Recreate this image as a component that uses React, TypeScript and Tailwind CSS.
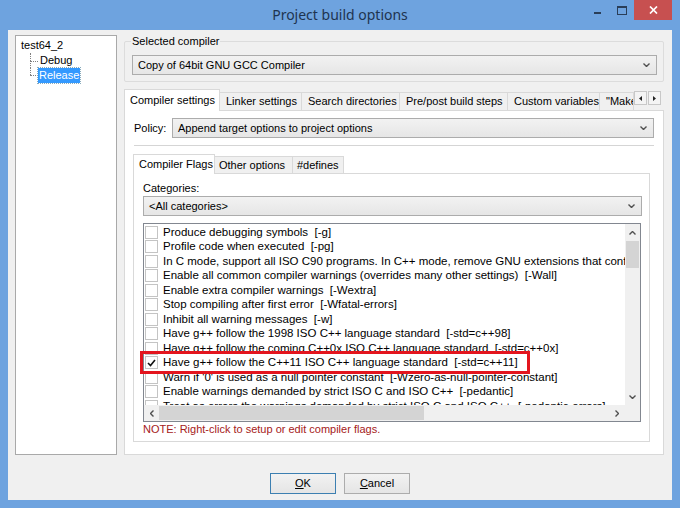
import React from "react";

const flags: { text: string; checked?: boolean }[] = [
  { text: "Produce debugging symbols  [-g]" },
  { text: "Profile code when executed  [-pg]" },
  {
    text: "In C mode, support all ISO C90 programs. In C++ mode, remove GNU extensions that conflict with ISO C++  [-ansi]",
  },
  { text: "Enable all common compiler warnings (overrides many other settings)  [-Wall]" },
  { text: "Enable extra compiler warnings  [-Wextra]" },
  { text: "Stop compiling after first error  [-Wfatal-errors]" },
  { text: "Inhibit all warning messages  [-w]" },
  { text: "Have g++ follow the 1998 ISO C++ language standard  [-std=c++98]" },
  { text: "Have g++ follow the coming C++0x ISO C++ language standard  [-std=c++0x]" },
  { text: "Have g++ follow the C++11 ISO C++ language standard  [-std=c++11]", checked: true },
  { text: "Warn if '0' is used as a null pointer constant  [-Wzero-as-null-pointer-constant]" },
  { text: "Enable warnings demanded by strict ISO C and ISO C++  [-pedantic]" },
  { text: "Treat as errors the warnings demanded by strict ISO C and ISO C++  [-pedantic-errors]" },
];

function Chevron({ dir = "down" }: { dir?: "down" | "up" | "left" | "right" }) {
  const pts = {
    down: "0.5,0.5 3.5,3.5 6.5,0.5",
    up: "0.5,3.5 3.5,0.5 6.5,3.5",
    left: "3.5,0.5 0.5,3.5 3.5,6.5",
    right: "0.5,0.5 3.5,3.5 0.5,6.5",
  }[dir];
  const vertical = dir === "down" || dir === "up";
  return (
    <svg width={vertical ? 7 : 4} height={vertical ? 4 : 7} viewBox={vertical ? "0 0 7 4" : "0 0 4 7"}>
      <polyline points={pts} fill="none" stroke="#505050" strokeWidth="1.4" />
    </svg>
  );
}

function Combo({ text, className }: { text: string; className: string }) {
  return (
    <div
      className={
        "flex items-center border border-[#acacac] bg-gradient-to-b from-[#f2f2f2] to-[#e6e6e6] pl-[5px] pr-[6px] " +
        className
      }
    >
      <span className="flex-1 whitespace-nowrap">{text}</span>
      <Chevron />
    </div>
  );
}

function Checkbox({ checked }: { checked?: boolean }) {
  return (
    <div className="w-[13px] h-[13px] shrink-0 border border-[#c4c4c4] bg-white flex items-center justify-center mr-[5px]">
      {checked && (
        <svg width="9" height="8" viewBox="0 0 9 8">
          <polyline points="1,4 3.5,6.5 8,1" fill="none" stroke="#111" strokeWidth="1.6" />
        </svg>
      )}
    </div>
  );
}

export default function App() {
  return (
    <div className="w-[680px] h-[508px] bg-[#6ea3df] flex flex-col overflow-hidden font-['Liberation_Sans',Arial,sans-serif] text-[11px] text-black leading-[13px]">
      {/* title bar */}
      <div className="h-[30px] grid grid-cols-[1fr_auto_1fr]">
        <div />
        <div className="pt-[6px] text-[14px] leading-[18px] text-[#1e3450] font-['Noto_Sans',sans-serif]">
          Project build options
        </div>
        <div className="flex justify-end items-start pr-[8px]">
          <div className="w-[26px] h-[20px] flex items-center justify-center">
            <div className="w-[7px] h-[2px] bg-[#2a3e58] mt-[6px]" />
          </div>
          <div className="w-[24px] h-[20px] flex items-center justify-center">
            <div className="w-[10px] h-[9px] border border-[#2a3e58] border-t-2" />
          </div>
          <div className="w-[38px] h-[20px] bg-[#c75050] flex items-center justify-center">
            <svg width="9" height="8" viewBox="0 0 9 8">
              <path d="M1 0.5 L8 7.5 M8 0.5 L1 7.5" stroke="#fff" strokeWidth="1.7" />
            </svg>
          </div>
        </div>
      </div>

      {/* client area */}
      <div className="mx-[8px] h-[470px] bg-[#f0f0f0] flex flex-col">
        <div className="flex pt-[5px] pl-[7px]">
          {/* tree */}
          <div className="w-[102px] h-[420px] border border-[#a9a9a9] bg-white pt-[2px] pl-[5px]">
            <div className="h-[15px] flex items-center">test64_2</div>
            <div className="flex">
              <div className="w-[8px] ml-[9px] flex flex-col">
                <div className="h-[8px] border-l border-dotted border-[#808080]" />
                <div className="h-[7px] border-l border-t border-dotted border-[#808080]" />
                <div className="h-[7px] border-l border-dotted border-[#808080]" />
                <div className="h-[1px] border-t border-dotted border-[#808080]" />
              </div>
              <div className="flex flex-col">
                <div className="h-[15px] flex items-center pl-[2px]">Debug</div>
                <div className="h-[15px] flex items-center px-[1px] bg-[#3399ff] text-white outline outline-1 outline-dotted outline-[#8ab]">
                  Release
                </div>
              </div>
            </div>
          </div>

          {/* right column */}
          <div className="ml-[7px] w-[540px] flex flex-col">
            <div className="mt-[6px] h-[41px] border border-[#dcdcdc] rounded-[2px] relative pl-[7px] pt-[13px]">
              <span className="absolute left-[6px] -top-[7px] bg-[#f0f0f0] px-[1px]">Selected compiler</span>
              <Combo text="Copy of 64bit GNU GCC Compiler" className="w-[525px] h-[20px]" />
            </div>

            {/* tabs */}
            <div className="mt-[6px] h-[22px] flex items-end">
              <div className="w-[96px] h-[22px] border border-b-0 border-[#d9d9d9] bg-white flex items-center pl-[5px] relative z-10 -mb-px">
                Compiler settings
              </div>
              <div className="w-[82px] h-[18px] border border-l-0 border-b-0 border-[#d9d9d9] bg-[#f0f0f0] flex items-center pl-[6px]">
                Linker settings
              </div>
              <div className="w-[98px] h-[18px] border border-l-0 border-b-0 border-[#d9d9d9] bg-[#f0f0f0] flex items-center pl-[6px]">
                Search directories
              </div>
              <div className="w-[108px] h-[18px] border border-l-0 border-b-0 border-[#d9d9d9] bg-[#f0f0f0] flex items-center pl-[6px]">
                Pre/post build steps
              </div>
              <div className="w-[92px] h-[18px] border border-l-0 border-b-0 border-[#d9d9d9] bg-[#f0f0f0] flex items-center pl-[6px]">
                Custom variables
              </div>
              <div className="w-[34px] h-[18px] border border-l-0 border-b-0 border-[#d9d9d9] bg-[#f0f0f0] flex items-center pl-[6px] overflow-hidden whitespace-nowrap">
                "Make" commands
              </div>
              <div className="h-[22px] flex items-start pt-[3px] gap-[1px]">
                <div className="w-[13px] h-[14px] border border-[#c8c8c8] bg-[#f4f4f4] flex items-center justify-center">
                  <svg width="3" height="5" viewBox="0 0 3 5"><polygon points="3,0 0,2.5 3,5" fill="#222" /></svg>
                </div>
                <div className="w-[13px] h-[14px] border border-[#c8c8c8] bg-[#f4f4f4] flex items-center justify-center">
                  <svg width="3" height="5" viewBox="0 0 3 5"><polygon points="0,0 3,2.5 0,5" fill="#222" /></svg>
                </div>
              </div>
            </div>

            {/* tab page */}
            <div className="h-[345px] border border-[#d9d9d9] bg-white pl-[9px] pt-[7px] flex flex-col">
              <div className="flex items-center h-[20px]">
                <span className="w-[38px]">Policy:</span>
                <Combo text="Append target options to project options" className="w-[482px] h-[20px]" />
              </div>
              <div className="mt-[7px] w-[520px] h-[2px] border-t border-[#d5d5d5] border-b border-b-white" />

              {/* inner tabs */}
              <div className="mt-[6px] h-[20px] flex items-end -ml-[1px]">
                <div className="w-[82px] h-[20px] border border-b-0 border-[#d9d9d9] bg-white flex items-center pl-[5px] relative z-10 -mb-px">
                  Compiler Flags
                </div>
                <div className="w-[78px] h-[17px] border border-l-0 border-b-0 border-[#d9d9d9] bg-[#f0f0f0] flex items-center pl-[4px]">
                  Other options
                </div>
                <div className="w-[51px] h-[17px] border border-l-0 border-b-0 border-[#d9d9d9] bg-[#f0f0f0] flex items-center pl-[4px]">
                  #defines
                </div>
              </div>
              <div className="w-[517px] h-[269px] -ml-[1px] border border-[#d9d9d9] bg-white pl-[9px] pt-[8px] flex flex-col">
                <div className="h-[13px]">Categories:</div>
                <Combo text="<All categories>" className="mt-[1px] w-[499px] h-[20px]" />

                {/* flags list */}
                <div className="mt-[7px] w-[498px] h-[199px] border border-[#828790] bg-white flex flex-col relative">
                  <div className="flex flex-1 min-h-0">
                    <div className="flex-1 overflow-hidden pt-[1px] pl-[1px] text-[11.5px]">
                      {flags.map((f) => (
                        <div key={f.text} className="h-[14.5px] flex items-center whitespace-pre">
                          <Checkbox checked={f.checked} />
                          <span>{f.text}</span>
                        </div>
                      ))}
                    </div>
                    <div className="w-[15px] bg-[#f0f0f0] flex flex-col items-center">
                      <div className="h-[17px] flex items-center justify-center">
                        <Chevron dir="up" />
                      </div>
                      <div className="w-[13px] h-[27px] bg-[#d4d4d4]" />
                      <div className="flex-1" />
                      <div className="h-[17px] flex items-center justify-center">
                        <Chevron dir="down" />
                      </div>
                    </div>
                  </div>
                  <div className="h-[16px] flex">
                    <div className="flex-1 bg-[#f0f0f0] flex items-center">
                      <div className="w-[15px] flex justify-center">
                        <Chevron dir="left" />
                      </div>
                      <div className="w-[265px] h-[14px] bg-[#d4d4d4]" />
                      <div className="flex-1" />
                      <div className="w-[17px] flex justify-center">
                        <Chevron dir="right" />
                      </div>
                    </div>
                    <div className="w-[15px] bg-[#f0f0f0]" />
                  </div>
                  {/* red highlight drawn over the list */}
                  <div className="absolute left-[-4px] top-[127px] w-[390px] h-[23px] border-[3px] border-[#e3151e]" />
                </div>
                <div className="mt-[1px] h-[13px] text-[#a52020]">NOTE: Right-click to setup or edit compiler flags.</div>
              </div>
            </div>
          </div>
        </div>

        {/* buttons */}
        <div className="mt-[18px] flex justify-center gap-[8px]">
          <div className="w-[66px] h-[21px] border border-[#3c7fb1] bg-gradient-to-b from-[#f2f2f2] to-[#e5e5e5] flex items-center justify-center">
            <span>
              <span className="underline">O</span>K
            </span>
          </div>
          <div className="w-[66px] h-[21px] border border-[#acacac] bg-gradient-to-b from-[#f2f2f2] to-[#e5e5e5] flex items-center justify-center">
            <span>
              <span className="underline">C</span>ancel
            </span>
          </div>
        </div>
      </div>
    </div>
  );
}
